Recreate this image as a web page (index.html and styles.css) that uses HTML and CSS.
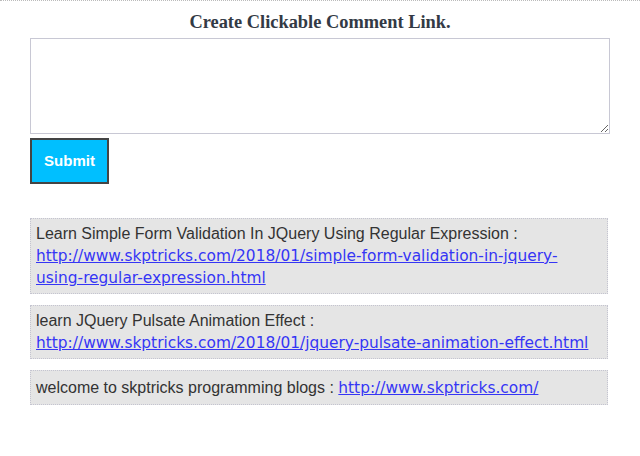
FILE: index.html
```html
<!DOCTYPE html>
<html>
<head>
<meta charset="utf-8">
<link rel="stylesheet" href="styles.css">
</head>
<body>
<div class="page">
  <h3 class="title">Create Clickable Comment Link.</h3>
  <textarea class="comment-input"></textarea>
  <button class="submit">Submit</button>
  <div class="comments">
    <div class="comment">Learn Simple Form Validation In JQuery Using Regular Expression : <a href="#">http://www.skptricks.com/2018/01/simple-form-validation-in-jquery-using-regular-expression.html</a></div>
    <div class="comment">learn JQuery Pulsate Animation Effect : <a href="#">http://www.skptricks.com/2018/01/jquery-pulsate-animation-effect.html</a></div>
    <div class="comment comment-last">welcome to skptricks programming blogs : <a href="#">http://www.skptricks.com/</a></div>
  </div>
</div>
</body>
</html>
```

FILE: styles.css
```css
html, body {
  margin: 0;
  padding: 0;
  background: #fff;
}
body {
  border-top: 1px dotted #bbb;
}
.page {
  width: 580px;
  margin: 0 30px;
  display: flex;
  flex-direction: column;
  align-items: flex-start;
}
.title {
  align-self: stretch;
  text-align: center;
  font-family: "Liberation Serif", serif;
  font-weight: bold;
  font-size: 18.4px;
  color: #333a45;
  margin: 8px 0 3px 0;
  line-height: 26px;
}
.comment-input {
  box-sizing: border-box;
  width: 580px;
  height: 96px;
  border: 1px solid #c8c8d4;
  margin: 0;
  padding: 2px;
}
.submit {
  box-sizing: border-box;
  margin-top: 4px;
  width: 79px;
  height: 46px;
  background: #00bfff;
  border: 2px solid #444;
  color: #fff;
  font-family: "Liberation Sans", sans-serif;
  font-weight: bold;
  font-size: 15px;
  padding: 0 0 2px 0;
}
.comments {
  margin-top: 34px;
  display: flex;
  flex-direction: column;
  gap: 11px;
  width: 578px;
}
.comment {
  background: #e5e5e5;
  border: 1px dotted #c4c4d0;
  padding: 4px 5px;
  font-family: "Liberation Sans", sans-serif;
  font-size: 16px;
  line-height: 22px;
  color: #333;
}
.comment-last {
  padding: 6px 5px 5px;
}
.comment a {
  font-family: "DejaVu Sans", Verdana, sans-serif;
  font-size: 15.4px;
  color: #3535f5;
}
```
